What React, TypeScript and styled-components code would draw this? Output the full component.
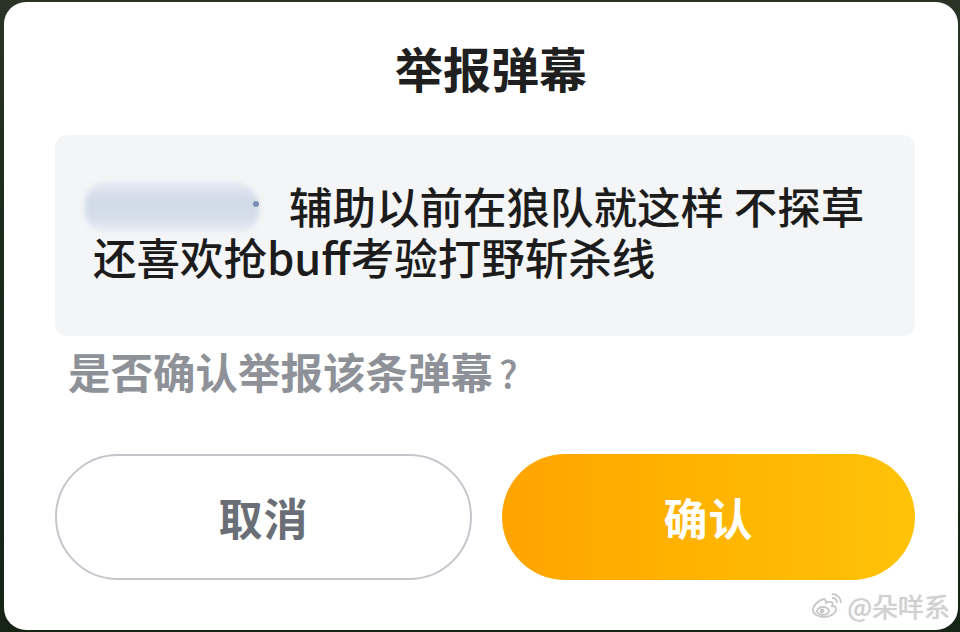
import styled, { createGlobalStyle } from "styled-components";

const GlobalStyle = createGlobalStyle`
  html, body {
    margin: 0;
    padding: 0;
    background: #1d2a1e;
  }
  body {
    font-family: "Noto Sans CJK SC", "Noto Sans", sans-serif;
  }
`;

const Page = styled.div`
  width: 960px;
  height: 632px;
  box-sizing: border-box;
  padding: 2px 2px 2px 4px;
  background: linear-gradient(180deg, #2a3326 0%, #1a2a1b 40%, #162416 100%);
`;

const Dialog = styled.div`
  position: relative;
  box-sizing: border-box;
  height: 100%;
  background: #ffffff;
  border-radius: 22px;
  padding: 35px 43px 0 51px;
  display: flex;
  flex-direction: column;
`;

const Title = styled.h1`
  margin: 0;
  text-align: center;
  font-size: 48px;
  line-height: 60px;
  font-weight: 700;
  color: #1f1f1f;
  padding-left: 12px;
`;

const MessageBox = styled.div`
  margin-top: 38px;
  background: #f4f5f7;
  border-radius: 12px;
  padding: 46px 28px 55px 38px;
  font-size: 43.5px;
  line-height: 49px;
  font-weight: 500;
  color: #1c1c1c;
`;

const BlurName = styled.span`
  position: relative;
  display: inline-block;
  width: 186px;
  height: 50px;
  margin-left: -10px;
  margin-right: 20px;
  vertical-align: -8px;
  &::before {
    content: "";
    position: absolute;
    inset: 0 10px 0 2px;
    border-radius: 22px 26px 20px 20px;
    background: linear-gradient(180deg, #e4e9f1 0%, #d0dae8 40%, #d5deea 70%, #e8edf4 100%);
    filter: blur(2.5px);
  }
  &::after {
    content: "";
    position: absolute;
    right: 10px;
    top: 19px;
    width: 6px;
    height: 6px;
    border-radius: 50%;
    background: #7c8fb2;
    filter: blur(0.5px);
  }
`;

const Question = styled.p`
  margin: 9px 0 0 13px;
  font-size: 42.5px;
  line-height: 52px;
  font-weight: 700;
  color: #8e9298;
`;

const QuestionMark = styled.span`
  margin-left: 6px;
  font-size: 38px;
  font-weight: 500;
`;

const ButtonRow = styled.div`
  margin-top: 55px;
  display: flex;
  gap: 30px;
`;

const Button = styled.button<{ $primary?: boolean }>`
  flex: 1;
  height: 126px;
  box-sizing: border-box;
  border-radius: 63px;
  font-family: inherit;
  font-size: 44px;
  font-weight: 700;
  letter-spacing: 1px;
  border: ${(p) => (p.$primary ? "none" : "2px solid #c3c7cc")};
  background: ${(p) =>
    p.$primary ? "linear-gradient(90deg, #ffa400 0%, #ffb400 50%, #ffc308 100%)" : "#ffffff"};
  color: ${(p) => (p.$primary ? "#ffffff" : "#6a6f77")};
`;

const Watermark = styled.div`
  position: absolute;
  right: 8px;
  bottom: 6px;
  display: flex;
  align-items: center;
  gap: 4px;
  font-size: 26px;
  color: #cfcfcf;
  text-shadow: 0 0 2px #ffffff, 0 0 1px #999;
`;

function WeiboLogo() {
  return (
    <svg width="32" height="26" viewBox="0 0 32 26" fill="none" stroke="#c8c8c8" strokeWidth="1.8">
      <path d="M13 6c-5 1-11 6-11 11 0 4 5 7 11 7 7 0 12-4 12-8 0-3-3-3-4-3 1-2 1-4-1-4-2-1-5 1-5 1 0-2-1-4-2-4z" />
      <ellipse cx="12" cy="18" rx="6" ry="4" />
      <circle cx="11" cy="18" r="1.5" fill="#c8c8c8" />
      <path d="M21 5c3 0 5 2 5 5" />
      <path d="M21 1c5 0 9 4 9 9" />
    </svg>
  );
}

export default function App() {
  return (
    <>
      <GlobalStyle />
      <Page>
        <Dialog>
          <Title>举报弹幕</Title>
          <MessageBox>
            <BlurName />
            辅助以前在狼队就这样 不探草 还喜欢抢buff考验打野斩杀线
          </MessageBox>
          <Question>
            是否确认举报该条弹幕<QuestionMark>?</QuestionMark>
          </Question>
          <ButtonRow>
            <Button>取消</Button>
            <Button $primary>确认</Button>
          </ButtonRow>
          <Watermark>
            <WeiboLogo />
            @朵咩系
          </Watermark>
        </Dialog>
      </Page>
    </>
  );
}
